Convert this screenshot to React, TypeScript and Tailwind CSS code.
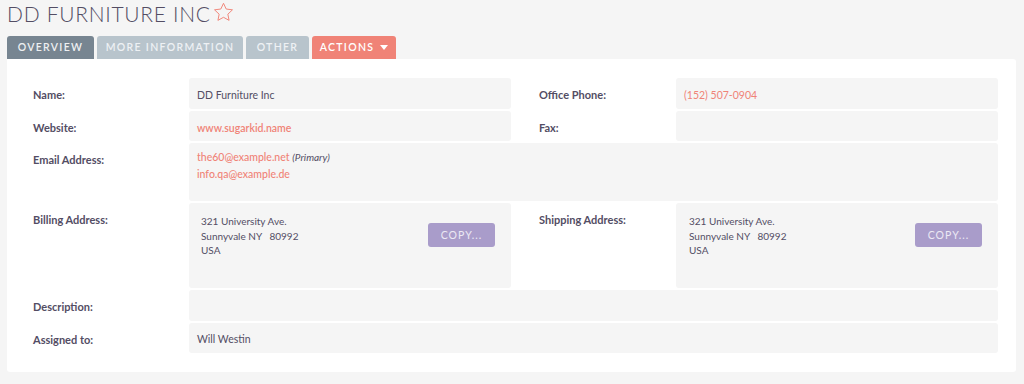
import React from "react";

const labelCls = "text-[11px] font-bold text-[#534d64] pt-[9px]";
const cellCls = "bg-[#f5f5f5] rounded-[3px] text-[10.5px] text-[#534d64]";

function Star() {
  return (
    <svg width="21" height="20" viewBox="0 0 24 23" className="ml-[2px]">
      <path
        d="M12 1.5l3.1 6.6 7.2.9-5.3 5 1.4 7.1L12 17.6l-6.4 3.5 1.4-7.1-5.3-5 7.2-.9z"
        fill="none"
        stroke="#f08377"
        strokeWidth="1.1"
        strokeLinejoin="round"
      />
    </svg>
  );
}

function CopyBtn() {
  return (
    <div className="w-[67px] h-[24px] bg-[#a99cca] rounded-[3px] flex items-center justify-center text-[10.5px] tracking-[1px] text-[#ece9f4]">
      COPY...
    </div>
  );
}

const tabBase =
  "rounded-t-[3px] flex items-center justify-center text-[10.5px] tracking-[1.3px] font-semibold";

export default function App() {
  return (
    <div
      className="w-[1024px] h-[384px] bg-[#f5f5f5] overflow-hidden"
      style={{ fontFamily: "Lato, 'Open Sans', sans-serif" }}
    >
      <div className="pl-[7px] h-[36px] flex items-start pt-[2px]">
        <h1 className="text-[21px] leading-[24px] text-[#534d64] tracking-[0.7px] font-light">
          DD FURNITURE INC
        </h1>
        <Star />
      </div>
      <div className="pl-[7px] flex gap-[3px] h-[23px]">
        <div className={`w-[87px] bg-[#778591] text-[#eef0f2] ${tabBase}`}>OVERVIEW</div>
        <div className={`w-[146px] bg-[#b8c4cc] text-[#eef1f4] ${tabBase}`}>MORE INFORMATION</div>
        <div className={`w-[63px] bg-[#b8c4cc] text-[#eef1f4] ${tabBase}`}>OTHER</div>
        <div className={`w-[84px] bg-[#f08377] text-white gap-[6px] ${tabBase}`}>
          ACTIONS
          <svg width="8" height="5" viewBox="0 0 8 5">
            <path d="M0 0h8L4 5z" fill="#ffffff" />
          </svg>
        </div>
      </div>
      <div className="ml-[7px] w-[1009px] bg-white rounded-b-[3px] rounded-tr-[3px] pt-[19px] pb-[19px] flex flex-col gap-[2px]">
        {/* Name / Office Phone */}
        <div className="flex h-[31px]">
          <div className={`w-[182px] pl-[26px] ${labelCls}`}>Name:</div>
          <div className={`w-[322px] pl-[8px] pt-[10px] ${cellCls}`}>DD Furniture Inc</div>
          <div className={`w-[165px] pl-[28px] ${labelCls}`}>Office Phone:</div>
          <div className={`w-[322px] pl-[8px] pt-[10px] ${cellCls} text-[#f08377]`}>
            (152) 507-0904
          </div>
        </div>
        {/* Website / Fax */}
        <div className="flex h-[30px]">
          <div className={`w-[182px] pl-[26px] ${labelCls}`}>Website:</div>
          <div className={`w-[322px] pl-[8px] pt-[10px] ${cellCls} text-[#f08377] font-semibold`}>
            www.sugarkid.name
          </div>
          <div className={`w-[165px] pl-[28px] ${labelCls}`}>Fax:</div>
          <div className={`w-[322px] ${cellCls}`}></div>
        </div>
        {/* Email */}
        <div className="flex h-[58px]">
          <div className={`w-[182px] pl-[26px] ${labelCls}`}>Email Address:</div>
          <div className={`w-[809px] pl-[8px] pt-[6px] ${cellCls} leading-[17px]`}>
            <div>
              <span className="text-[#f08377] font-medium">the60@example.net</span>{" "}
              <span className="italic text-[10px]">(Primary)</span>
            </div>
            <div className="text-[#f08377] font-medium">info.qa@example.de</div>
          </div>
        </div>
        {/* Addresses */}
        <div className="flex h-[85px]">
          <div className={`w-[182px] pl-[26px] ${labelCls}`}>Billing Address:</div>
          <div className={`w-[322px] pl-[12px] pr-[16px] pt-[11px] ${cellCls} text-[10px] flex justify-between leading-[14.5px]`}>
            <div>
              <div>321 University Ave.</div>
              <div>Sunnyvale NY&nbsp;&nbsp;&nbsp;80992</div>
              <div>USA</div>
            </div>
            <div className="pt-[9px]">
              <CopyBtn />
            </div>
          </div>
          <div className={`w-[165px] pl-[28px] ${labelCls}`}>Shipping Address:</div>
          <div className={`w-[322px] pl-[13px] pr-[16px] pt-[11px] ${cellCls} text-[10px] flex justify-between leading-[14.5px]`}>
            <div>
              <div>321 University Ave.</div>
              <div>Sunnyvale NY&nbsp;&nbsp;&nbsp;80992</div>
              <div>USA</div>
            </div>
            <div className="pt-[9px]">
              <CopyBtn />
            </div>
          </div>
        </div>
        {/* Description */}
        <div className="flex h-[31px]">
          <div className={`w-[182px] pl-[26px] ${labelCls}`}>Description:</div>
          <div className={`w-[809px] ${cellCls}`}></div>
        </div>
        {/* Assigned */}
        <div className="flex h-[30px]">
          <div className={`w-[182px] pl-[26px] ${labelCls}`}>Assigned to:</div>
          <div className={`w-[809px] pl-[8px] pt-[9px] ${cellCls}`}>Will Westin</div>
        </div>
      </div>
    </div>
  );
}
